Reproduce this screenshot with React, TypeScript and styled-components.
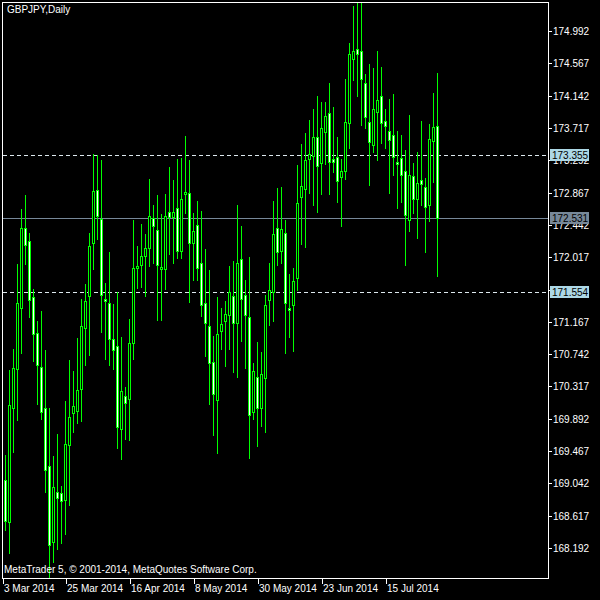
import React from "react";
import styled, { createGlobalStyle } from "styled-components";

const Global = createGlobalStyle`
  html, body { margin: 0; padding: 0; background: #000; }
`;

const Screen = styled.div`
  width: 600px;
  height: 600px;
  background: #000;
  font-family: "Liberation Sans", Arial, sans-serif;
`;

const Chart = styled.svg`
  display: block;
`;

const Label = styled.text`
  fill: #fff;
  font-size: 10px;
  font-family: "Liberation Sans", Arial, sans-serif;
`;

const TOP = 174.992;
const BOT = 168.192;
const y = (p: number) => Math.round(31 + ((TOP - p) / (TOP - BOT)) * 517);

// anchor closes by x pixel
const anchors: [number, number][] = [
  [5, 169.0], [12, 170.3], [20, 172.6], [28, 171.8], [35, 170.6], [42, 169.4],
  [50, 168.4], [58, 168.8], [66, 169.2], [75, 170.4], [85, 171.8], [95, 172.6],
  [102, 171.3], [110, 170.7], [120, 169.9], [130, 171.2], [140, 172.0], [150, 172.3],
  [160, 171.9], [170, 172.8], [178, 172.5], [188, 172.6], [200, 171.5], [212, 170.5],
  [222, 170.9], [232, 171.4], [242, 171.6], [250, 170.2], [258, 170.0], [268, 171.6],
  [280, 172.5], [290, 171.0], [300, 173.0], [310, 173.3], [320, 173.7], [335, 173.0],
  [345, 173.9], [355, 174.9], [365, 174.2], [372, 173.8], [382, 173.5], [392, 173.1],
  [400, 172.9], [410, 172.7], [418, 172.8], [426, 172.6], [432, 173.8], [438, 172.53],
];

function interp(x: number) {
  for (let i = 0; i < anchors.length - 1; i++) {
    const [x0, p0] = anchors[i];
    const [x1, p1] = anchors[i + 1];
    if (x >= x0 && x <= x1) return p0 + ((p1 - p0) * (x - x0)) / (x1 - x0);
  }
  return anchors[anchors.length - 1][1];
}

let seed = 11;
const rnd = () => {
  seed = (seed * 16807) % 2147483647;
  return seed / 2147483647;
};

type Bar = { x: number; o: number; c: number; h: number; l: number };
const bars: Bar[] = [];
let prev = 169.1;
for (let x = 5; x <= 438; x += 4) {
  const c = x === 437 ? 172.53 : interp(x) + (rnd() - 0.5) * 0.9;
  const o = prev + (rnd() - 0.5) * 0.15;
  const h = Math.max(o, c) + 0.1 + rnd() * 0.7;
  const l = Math.min(o, c) - 0.1 - rnd() * 0.7;
  bars.push({ x, o, c, h, l });
  prev = c;
}

const priceTicks = Array.from({ length: 17 }, (_, i) => TOP - i * 0.425);
const dates = [
  [3, "3 Mar 2014"], [66, "25 Mar 2014"], [130, "16 Apr 2014"], [194, "8 May 2014"],
  [258, "30 May 2014"], [322, "23 Jun 2014"], [386, "15 Jul 2014"],
] as [number, string][];

const levels = [
  { p: 173.355, dash: true, bg: "#add8e6" },
  { p: 172.531, dash: false, bg: "#778899" },
  { p: 171.554, dash: true, bg: "#add8e6" },
];

export default function App() {
  return (
    <Screen>
      <Global />
      <Chart width={600} height={600} shapeRendering="crispEdges">
        <defs>
          <clipPath id="plot">
            <rect x={3} y={3} width={545} height={575} />
          </clipPath>
        </defs>
        <g clipPath="url(#plot)">
          {levels.map((lv) =>
            lv.dash ? (
              <line key={lv.p} x1={3} x2={548} y1={y(lv.p) + 0.5} y2={y(lv.p) + 0.5}
                stroke="#dde8ee" strokeDasharray="4 3" />
            ) : (
              <rect key={lv.p} x={3} y={y(lv.p)} width={545} height={1} fill="#778899" />
            )
          )}
          {bars.map((b) => {
            const top = y(Math.max(b.o, b.c));
            const bot = Math.max(top + 2, y(Math.min(b.o, b.c)));
            const bear = b.c < b.o;
            return (
              <g key={b.x}>
                <rect x={b.x} y={y(b.h)} width={1} height={y(b.l) - y(b.h)} fill="#00ff00" />
                <rect x={b.x - 1} y={top} width={3} height={bot - top + 1} fill="#00ff00" />
                <rect x={b.x} y={top + 1} width={1} height={bot - top - 1} fill={bear ? "#fff" : "#000"} />
              </g>
            );
          })}
        </g>
        <rect x={2.5} y={2.5} width={546} height={576} fill="none" stroke="#fff" />
        <Label x={7} y={13}>GBPJPY,Daily</Label>
        <Label x={4} y={573}>MetaTrader 5, © 2001-2014, MetaQuotes Software Corp.</Label>
        {priceTicks.map((p) => (
          <g key={p}>
            <rect x={549} y={y(p)} width={3} height={1} fill="#fff" />
            <Label x={553} y={y(p) + 4}>{p.toFixed(3)}</Label>
          </g>
        ))}
        {levels.map((lv) => (
          <g key={lv.p}>
            <rect x={550} y={y(lv.p) - 6} width={39} height={12} fill={lv.bg} />
            <Label x={552} y={y(lv.p) + 4} style={{ fill: "#000" }}>
              {lv.p.toFixed(3)}
            </Label>
          </g>
        ))}
        {dates.map(([x, d]) => (
          <g key={d}>
            <rect x={x} y={579} width={1} height={5} fill="#fff" />
            <Label x={x + 1} y={592}>{d}</Label>
          </g>
        ))}
      </Chart>
    </Screen>
  );
}
